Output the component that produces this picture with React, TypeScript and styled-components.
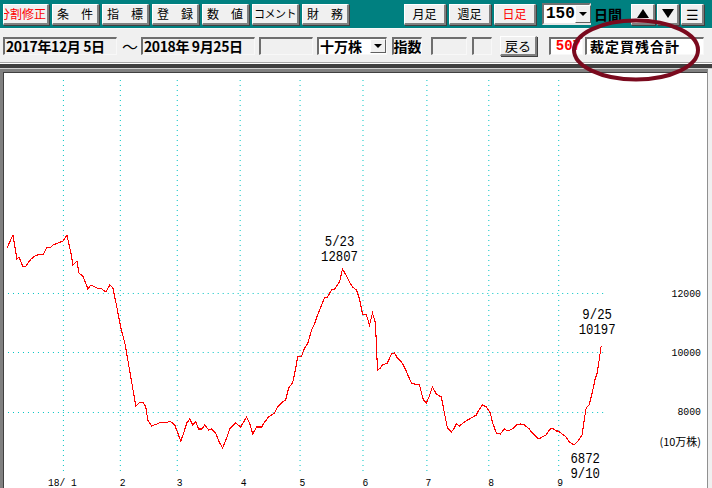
import React from "react";
import styled, { createGlobalStyle } from "styled-components";

const GlobalStyle = createGlobalStyle`
  html, body { margin: 0; padding: 0; background: #f0f0f0; }
  body { font-family: "Noto Sans CJK JP", "Liberation Sans", sans-serif; }
`;

const JP = `"Noto Sans CJK JP", "Liberation Sans", sans-serif`;
const MONO = `"Liberation Mono", "Noto Sans CJK JP", monospace`;

// price series traced off the original chart, in page pixels
const series: [number, number][] = [
  [7, 248], [13, 235], [17, 259], [19, 257], [23, 267], [26, 266], [31, 259], [35, 256],
  [40, 254], [43, 255], [47, 247], [50, 248], [53, 245], [58, 243], [63, 241], [67, 235],
  [71, 253], [73, 265], [77, 261], [79, 273], [83, 276], [88, 289], [91, 285], [97, 288],
  [102, 289], [106, 292], [110, 285], [113, 288], [117, 307], [121, 328], [125, 343],
  [128, 360], [132, 383], [136, 406], [139, 403], [143, 402], [146, 407], [148, 420],
  [152, 426], [157, 424], [162, 422], [166, 423], [170, 421], [175, 425], [178, 433],
  [181, 441], [184, 433], [187, 423], [190, 419], [193, 425], [196, 422], [199, 429],
  [202, 429], [205, 425], [209, 430], [212, 429], [216, 433], [220, 443], [223, 448],
  [227, 438], [230, 429], [236, 423], [241, 427], [247, 417], [250, 423], [253, 434],
  [257, 427], [262, 427], [265, 422], [269, 417], [275, 413], [278, 407], [283, 402],
  [286, 400], [289, 388], [293, 383], [296, 369], [298, 357], [302, 356], [305, 348],
  [308, 344], [312, 330], [315, 324], [318, 315], [322, 305], [325, 298], [328, 297],
  [332, 290], [335, 289], [340, 282], [343, 269], [347, 276], [350, 282], [353, 287],
  [357, 290], [360, 299], [363, 314], [367, 315], [370, 325], [373, 313], [376, 323],
  [378, 370], [381, 368], [383, 365], [388, 363], [392, 354], [395, 353], [398, 358],
  [402, 362], [405, 367], [408, 374], [412, 383], [415, 384], [420, 385], [424, 400],
  [427, 403], [430, 396], [433, 387], [437, 394], [442, 397], [445, 413], [448, 428],
  [452, 432], [455, 428], [457, 424], [460, 426], [465, 422], [470, 419], [477, 415],
  [479, 411], [483, 405], [487, 407], [491, 413], [493, 422], [497, 433], [501, 434],
  [505, 429], [508, 431], [513, 429], [517, 425], [521, 424], [525, 425], [530, 429],
  [533, 433], [537, 437], [540, 439], [543, 437], [547, 435], [550, 430], [553, 428],
  [557, 431], [559, 431], [563, 434], [567, 437], [570, 442], [575, 445], [578, 442],
  [583, 435], [585, 420], [587, 408], [590, 405], [593, 393], [596, 379], [598, 373],
  [600, 360], [602, 346],
];

const monthLines = [63, 120, 177, 240, 300, 363, 427, 489, 559];
const valueLines = [293, 352, 412];
const monthLabels: { x: number; text: string }[] = [
  { x: 48, text: "18/ 1" }, { x: 120, text: "2" }, { x: 177, text: "3" },
  { x: 241, text: "4" }, { x: 300, text: "5" }, { x: 363, text: "6" },
  { x: 426, text: "7" }, { x: 489, text: "8" }, { x: 558, text: "9" },
];
const valueLabels = [
  { y: 297, text: "12000" }, { y: 356, text: "10000" }, { y: 415, text: "8000" },
];
const notes = [
  { x: 340, y: 246, text: "5/23" }, { x: 340, y: 261, text: "12807" },
  { x: 598, y: 319, text: "9/25" }, { x: 598, y: 334, text: "10197" },
  { x: 586, y: 463, text: "6872" }, { x: 586, y: 478, text: "9/10" },
];

const Screen = styled.div`
  position: relative;
  width: 712px;
  height: 488px;
  overflow: hidden;
  display: flex;
  flex-direction: column;
  background: #f0f0f0;
`;

const Toolbar = styled.div`
  height: 29px;
  box-sizing: border-box;
  padding: 4px 3px;
  display: flex;
  align-items: center;
  gap: 3px;
  background: #008080;
  border-bottom: 1px solid #f8f8f8;
`;

const ToolButton = styled.button<{ $w?: number; $red?: boolean; $ml?: number; $tight?: boolean }>`
  width: ${({ $w }) => $w ?? 47}px;
  height: 21px;
  margin: 0 0 0 ${({ $ml }) => $ml ?? 0}px;
  padding: 0 ${({ $tight }) => ($tight ? 1 : 2)}px;
  box-sizing: border-box;
  display: flex;
  align-items: center;
  justify-content: ${({ $tight }) => ($tight ? "flex-end" : "center")};
  overflow: hidden;
  white-space: nowrap;
  background: #f0f0f0;
  border-style: solid;
  border-width: 1px 2px 2px 1px;
  border-color: #ffffff #808080 #808080 #ffffff;
  box-shadow: 1px 1px 0 #404040;
  font-family: ${JP};
  font-size: 12px;
  line-height: 1;
  color: ${({ $red }) => ($red ? "#ff0000" : "#000000")};
  flex-shrink: 0;
`;

const Combo = styled.div`
  margin-left: 3px;
  width: 49px;
  height: 22px;
  box-sizing: border-box;
  display: flex;
  align-items: center;
  justify-content: space-between;
  background: #ffffff;
  border-style: solid;
  border-width: 2px;
  border-color: #707070 #e8e8e8 #e8e8e8 #707070;
  padding-left: 2px;
  font-family: ${MONO};
  font-weight: bold;
  font-size: 16px;
  line-height: 1;
  flex-shrink: 0;
`;

const DropArrow = styled.span<{ $h?: number }>`
  width: 16px;
  height: ${({ $h }) => $h ?? 18}px;
  box-sizing: border-box;
  display: flex;
  align-items: center;
  justify-content: center;
  background: #f0f0f0;
  border-style: solid;
  border-width: 1px;
  border-color: #ffffff #606060 #606060 #ffffff;
  flex-shrink: 0;
  &::after {
    content: "";
    border-left: 4px solid transparent;
    border-right: 4px solid transparent;
    border-top: 4px solid #000;
  }
`;

const BarLabel = styled.span`
  width: 29px;
  font-family: ${JP};
  font-weight: bold;
  font-size: 14px;
  line-height: 1;
  color: #000;
  white-space: nowrap;
  flex-shrink: 0;
`;

const Arrow = styled.span<{ $dir: "up" | "down" }>`
  width: 0;
  height: 0;
  border-left: 6px solid transparent;
  border-right: 6px solid transparent;
  ${({ $dir }) =>
    $dir === "up" ? "border-bottom: 9px solid #000;" : "border-top: 9px solid #000;"}
`;

const RangeBar = styled.div`
  height: 33px;
  box-sizing: border-box;
  padding-left: 3px;
  display: flex;
  align-items: center;
  background: #f0f0f0;
`;

const Field = styled.div<{ $w: number; $ml?: number; $white?: boolean; $red?: boolean; $right?: boolean }>`
  width: ${({ $w }) => $w}px;
  height: 18px;
  margin-left: ${({ $ml }) => $ml ?? 0}px;
  box-sizing: border-box;
  display: flex;
  align-items: center;
  justify-content: ${({ $right }) => ($right ? "flex-end" : "flex-start")};
  padding: 0 1px;
  overflow: hidden;
  white-space: pre;
  background: ${({ $white }) => ($white ? "#ffffff" : "#f0f0f0")};
  border-style: solid;
  border-width: 2px 1px 1px 2px;
  border-color: #6e6e6e #f8f8f8 #f8f8f8 #6e6e6e;
  font-family: ${({ $red }) => ($red ? MONO : JP)};
  font-weight: bold;
  font-size: 14px;
  line-height: 1;
  color: ${({ $red }) => ($red ? "#ff0000" : "#000000")};
  flex-shrink: 0;
`;

const DateText = styled.span`
  letter-spacing: -0.4px;
`;

const TitleText = styled.span`
  padding-left: 2px;
  letter-spacing: 1px;
`;

const Tilde = styled.span`
  width: 14px;
  margin-left: 5px;
  font-family: ${JP};
  font-size: 16px;
  line-height: 1;
  color: #000;
  text-align: center;
`;

const Divider = styled.div`
  height: 7px;
  box-sizing: border-box;
  border-top: 1px solid #a8a8a8;
  border-bottom: 1px solid #d0d0d0;
  background: linear-gradient(#ffffff 0 1px, #404040 1px 5px, #f0f0f0 5px);
`;

const ChartPanel = styled.div`
  flex: 1;
  margin-right: 4px;
  box-sizing: border-box;
  background: #ffffff;
  border-style: solid;
  border-width: 3px 1px 0 3px;
  border-color: #808080 #909090 #808080 #808080;
  box-shadow: inset 1px 1px 0 #404040;
  overflow: hidden;
  display: flex;
`;

const ChartSvg = styled.svg`
  display: block;
  width: 100%;
  height: 100%;
`;

const Ring = styled.svg`
  position: absolute;
  left: 571px;
  top: 18px;
  width: 130px;
  height: 64px;
  pointer-events: none;
`;

function PriceChart() {
  const points = series.map(([x, y]) => `${x},${y}`).join(" ");
  return (
    <ChartSvg viewBox="3 72 705 416" preserveAspectRatio="none">
      {monthLines.map((x) => (
        <line key={x} x1={x + 0.5} y1={80} x2={x + 0.5} y2={472} stroke="#00c4c4" strokeDasharray="1 4" />
      ))}
      {valueLines.map((y) => (
        <line key={y} x1={8} y1={y + 0.5} x2={605} y2={y + 0.5} stroke="#00c4c4" strokeDasharray="1 4" />
      ))}
      <polyline points={points} fill="none" stroke="#ff0000" strokeWidth={1.1} shapeRendering="crispEdges" />
      <g fontFamily={MONO} fontSize={11} fill="#000">
        {monthLabels.map((m) => (
          <text key={m.text} x={m.x} y={486} textLength={m.text.length * 5.8} lengthAdjust="spacingAndGlyphs">
            {m.text}
          </text>
        ))}
        {valueLabels.map((v) => (
          <text key={v.text} x={702} y={v.y} textAnchor="end" textLength={v.text.length * 5.9} lengthAdjust="spacingAndGlyphs">
            {v.text}
          </text>
        ))}
        <text x={702} y={446} textAnchor="end" fontFamily={JP} fontSize={11}>(10万株)</text>
      </g>
      <g fontFamily={MONO} fontSize={14} fill="#000">
        {notes.map((n) => (
          <text
            key={n.text}
            x={n.x - (n.text.length * 7.4) / 2}
            y={n.y}
            textLength={n.text.length * 7.4}
            lengthAdjust="spacingAndGlyphs"
          >
            {n.text}
          </text>
        ))}
      </g>
    </ChartSvg>
  );
}

export default function App() {
  return (
    <>
      <GlobalStyle />
      <Screen>
        <Toolbar>
          <ToolButton $w={46} $red $tight>分割修正</ToolButton>
          <ToolButton>条　件</ToolButton>
          <ToolButton>指　標</ToolButton>
          <ToolButton>登　録</ToolButton>
          <ToolButton>数　値</ToolButton>
          <ToolButton style={{ fontSize: 11, letterSpacing: "-0.5px", padding: 0 }}>コメント</ToolButton>
          <ToolButton>財　務</ToolButton>
          <ToolButton $w={42} $ml={52}>月足</ToolButton>
          <ToolButton $w={42}>週足</ToolButton>
          <ToolButton $w={42} $red>日足</ToolButton>
          <Combo>
            150
            <DropArrow />
          </Combo>
          <BarLabel>日間</BarLabel>
          <ToolButton $w={24} $ml={5}><Arrow $dir="up" /></ToolButton>
          <ToolButton $w={22} style={{ marginLeft: -1 }}><Arrow $dir="down" /></ToolButton>
          <ToolButton $w={23} style={{ marginLeft: -1, fontSize: 14 }}>☰</ToolButton>
        </Toolbar>
        <RangeBar>
          <Field $w={114}><DateText>2017年12月 5日</DateText></Field>
          <Tilde>～</Tilde>
          <Field $w={114} $ml={5}><DateText>2018年 9月25日</DateText></Field>
          <Field $w={54} $ml={4} />
          <Field $w={70} $ml={4} $white style={{ paddingRight: 0, justifyContent: "space-between" }}>
            十万株
            <DropArrow $h={14} />
          </Field>
          <Field $w={30} $ml={5} style={{ padding: 0, justifyContent: "center" }}>指数</Field>
          <Field $w={36} $ml={9} />
          <Field $w={20} $ml={5} />
          <ToolButton $w={37} $ml={8} style={{ height: 20, fontSize: 13 }}>戻る</ToolButton>
          <Field $w={34} $ml={12} $white $red $right>507</Field>
          <Field $w={119} $ml={2} $white><TitleText>裁定買残合計</TitleText></Field>
        </RangeBar>
        <Divider />
        <ChartPanel>
          <PriceChart />
        </ChartPanel>
        <Ring viewBox="0 0 130 64">
          <ellipse cx={65} cy={32} rx={62} ry={29.5} fill="none" stroke="#7a0a1e" strokeWidth={4} />
        </Ring>
      </Screen>
    </>
  );
}
